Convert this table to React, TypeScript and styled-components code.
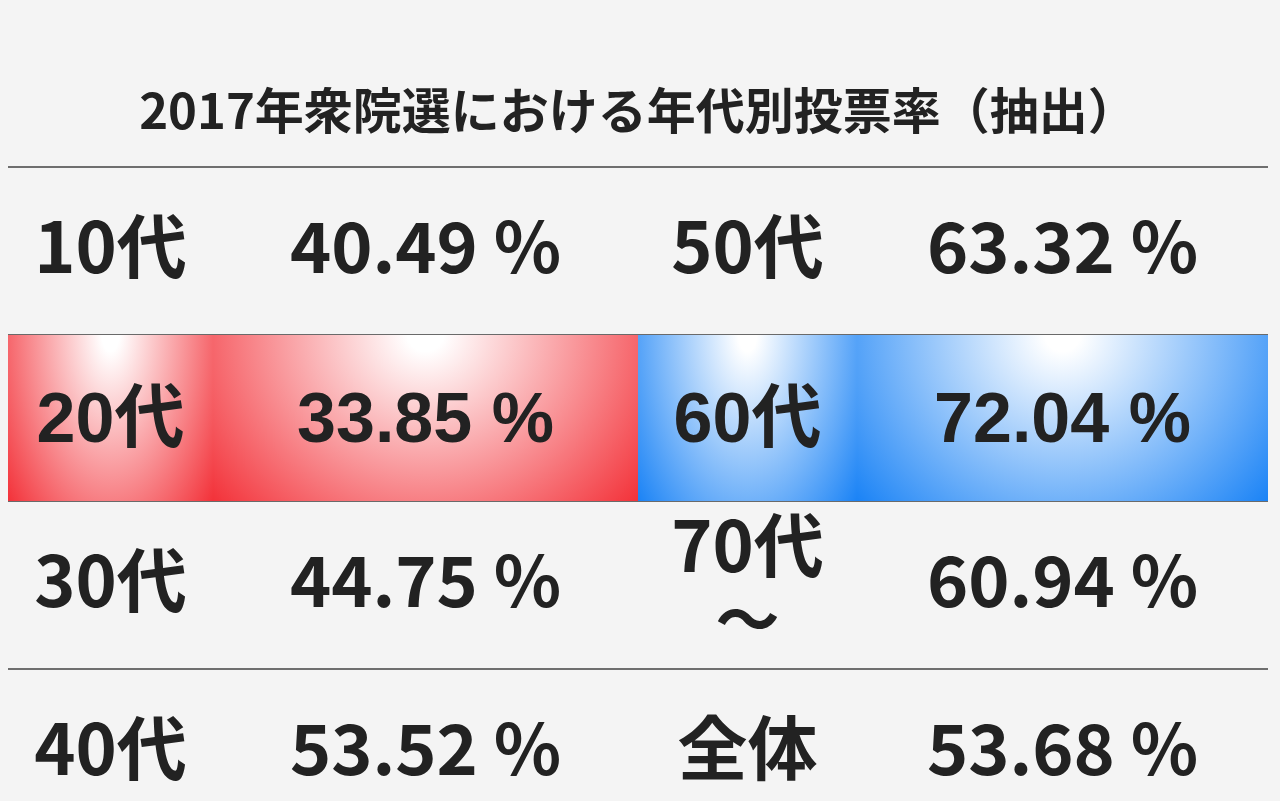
import React from "react";
import styled, { createGlobalStyle, css } from "styled-components";

const GlobalStyle = createGlobalStyle`
  html, body {
    margin: 0;
    padding: 0;
    background: #f4f4f4;
  }
  body {
    font-family: "Noto Sans CJK JP", "Noto Sans", sans-serif;
    color: #222;
    overflow: hidden;
  }
`;

type Tone = "red" | "blue" | undefined;

interface Cell {
  text: string;
  sub?: string;
}

interface RowData {
  cells: [Cell, Cell, Cell, Cell];
  tones?: [Tone, Tone];
}

const rows: RowData[] = [
  {
    cells: [{ text: "10代" }, { text: "40.49 %" }, { text: "50代" }, { text: "63.32 %" }],
  },
  {
    cells: [{ text: "20代" }, { text: "33.85 %" }, { text: "60代" }, { text: "72.04 %" }],
    tones: ["red", "blue"],
  },
  {
    cells: [{ text: "30代" }, { text: "44.75 %" }, { text: "70代", sub: "〜" }, { text: "60.94 %" }],
  },
  {
    cells: [{ text: "40代" }, { text: "53.52 %" }, { text: "全体" }, { text: "53.68 %" }],
  },
];

const toneColor = { red: "#f2232b", blue: "#0a7af5" };

const Page = styled.div`
  padding: 0 12px 0 8px;
`;

const Title = styled.h1`
  margin: 0;
  padding: 80px 0 30px;
  line-height: 56px;
  font-size: 49px;
  font-weight: 700;
  text-align: center;
  border-bottom: 2px solid #6e6e6e;
`;

const Row = styled.div<{ $hl?: boolean }>`
  display: grid;
  grid-template-columns: 205px 425px 219px 411px;
  height: 166px;
  border-bottom: 1px solid ${(p) => (p.$hl ? "#6a6a6a" : "transparent")};
  ${(p) =>
    p.$hl &&
    css`
      border-top: 1px solid #6a6a6a;
      margin-top: -1px;
      font-family: "Liberation Sans", "Noto Sans CJK JP", sans-serif;
    `}
  &:nth-child(4) {
    border-bottom: 2px solid #6e6e6e;
  }
`;

const CellBox = styled.div<{ $tone?: Tone }>`
  display: flex;
  flex-direction: column;
  align-items: center;
  justify-content: center;
  padding-bottom: ${(p) => (p.$tone ? "0" : "16px")};
  font-size: 70px;
  font-weight: 700;
  line-height: 70px;
  white-space: nowrap;
  ${(p) =>
    p.$tone &&
    css`
      background: radial-gradient(
        ellipse 70% 165% at 50% 0%,
        #ffffff 0%,
        #ffffff 6%,
        ${toneColor[p.$tone]} 100%
      );
    `}
`;

const Sub = styled.span`
  font-size: 64px;
  line-height: 64px;
  margin-top: 6px;
`;

export default function App() {
  return (
    <Page>
      <GlobalStyle />
      <Title>2017年衆院選における年代別投票率（抽出）</Title>
      {rows.map((row, i) => (
        <Row key={i} $hl={!!row.tones}>
          {row.cells.map((c, j) => (
            <CellBox key={j} $tone={row.tones ? row.tones[j < 2 ? 0 : 1] : undefined}>
              <span>{c.text}</span>
              {c.sub && <Sub>{c.sub}</Sub>}
            </CellBox>
          ))}
        </Row>
      ))}
    </Page>
  );
}
